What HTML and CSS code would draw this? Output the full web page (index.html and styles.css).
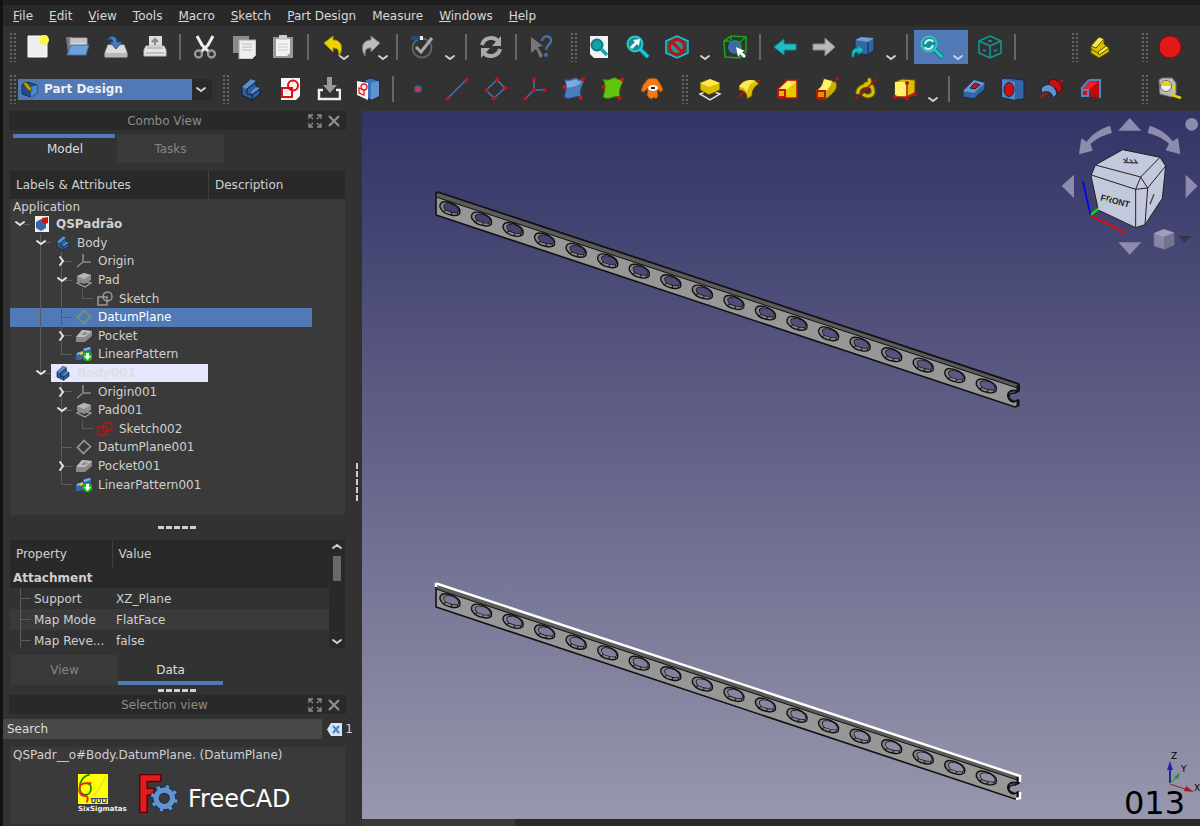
FILE: index.html
```html
<!DOCTYPE html>
<html lang="en">
<head>
  <meta charset="UTF-8">
  <title>FreeCAD</title>
  <link rel="stylesheet" href="styles.css">
</head>
<body>
  <!-- shared shapes -->
  <svg class="defs">
    <defs>
      <symbol id="down" viewBox="0 0 12 8"><path d="M2 2l4 3 4-3" fill="none" stroke="currentColor" stroke-width="2" stroke-linecap="round"/></symbol>
      <symbol id="float" viewBox="0 0 14 14"><path d="M1 5V1h4M1 1l4 4M9 1h4v4M13 1L9 5M1 9v4h4M1 13l4-4M13 9v4H9M13 13L9 9" fill="none" stroke="currentColor" stroke-width="1.3"/></symbol>
      <symbol id="cross" viewBox="0 0 14 14"><path d="M2 2l10 10M12 2L2 12" fill="none" stroke="currentColor" stroke-width="2.4"/></symbol>
      <symbol id="body" viewBox="0 0 24 24"><path d="M3 10l9-8 5 2v6l4 1v6l-8 6-10-5z" fill="#2f5f9e" stroke="#0b1f38"/><path d="M3 10l9-8 5 2-9 8z" fill="#5b8fca"/><path d="M12 15l5-5 4 1-8 6z" fill="#5b8fca"/><path d="M8 12v5l5 1 8-6M13 18v5M8 12l9-7" fill="none" stroke="#0b1f38"/></symbol>
      <symbol id="origin" viewBox="0 0 16 16"><path d="M7 1v8h8M7 9l-6 5" fill="none" stroke="#8a8a8a" stroke-width="1.6"/></symbol>
      <symbol id="pad" viewBox="0 0 16 16"><path d="M1 11l6-2 8 2-6 4z" fill="none" stroke="#a0a0a0" stroke-width="1.3"/><path d="M1 4l7-3 7 2v5l-7 4-7-3z" fill="#8c8c8c"/><path d="M1 4l7-3 7 2-7 4z" fill="#b4b4b4"/></symbol>
      <symbol id="sketch" viewBox="0 0 16 16"><path d="M1 6h9v8H1z" fill="none" stroke="currentColor" stroke-width="1.5"/><circle cx="10.500" cy="5.500" r="4.500" fill="none" stroke="currentColor" stroke-width="1.500"/></symbol>
      <symbol id="plane" viewBox="0 0 16 16"><path d="M8 1.500l6.500 6L7.500 14.500l-6-6z" fill="none" stroke="currentColor" stroke-width="1.600"/></symbol>
      <symbol id="pocket" viewBox="0 0 16 16"><path d="M0 10l6-8 10 1v5l-7 6-9 0z" fill="#8a8a8a"/><path d="M0 9l6-7 10 1-7 6z" fill="#bdbdbd"/><path d="M5 7l3-3 4 1-3 2z" fill="#8a8a8a"/></symbol>
      <symbol id="pattern" viewBox="0 0 16 16"><path d="M0 8l7-3V2l8-1v8L4 14H0z" fill="#3465a4"/><path d="M1 8l6-2M8 4l6-2" stroke="#8ab4e0" stroke-width="2"/><path d="M4 8l3-1" stroke="#edd400" stroke-width="2"/><circle cx="11.500" cy="10.500" r="4.800" fill="#10c010"/><path d="M10 7h3v3h2l-3.500 4L8 10h2z" fill="#fff"/></symbol>
      <symbol id="lens" viewBox="0 0 24 24"><path d="M14 14l8 8" stroke="#067a80" stroke-width="5"/><path d="M14 14l8 8" stroke="#25c6cc" stroke-width="3"/><circle cx="9" cy="9" r="7.500" fill="#128f96" stroke="#25c6cc" stroke-width="2"/></symbol>
    </defs>
  </svg>

  <header>
    <nav class="menu">
      <a href="#"><u>F</u>ile</a>
      <a href="#"><u>E</u>dit</a>
      <a href="#"><u>V</u>iew</a>
      <a href="#"><u>T</u>ools</a>
      <a href="#"><u>M</u>acro</a>
      <a href="#"><u>S</u>ketch</a>
      <a href="#"><u>P</u>art Design</a>
      <a href="#">Measure</a>
      <a href="#"><u>W</u>indows</a>
      <a href="#"><u>H</u>elp</a>
    </nav>

    <div class="toolbars">
      <div class="group">
        <i class="grip"></i>
        <button title="New"><svg viewBox="0 0 24 24"><path d="M2 1h19v21H2z" fill="#eee" stroke="#fff"/><circle cx="18" cy="5" r="5" fill="#fcf35a"/><circle cx="18" cy="5" r="2.500" fill="#fff82a"/></svg></button>
        <button title="Open"><svg viewBox="0 0 24 24"><path d="M1 2h6l1 2v16H3z" fill="#777"/><path d="M5 3h17v9H5z" fill="#ddd" stroke="#999"/><path d="M6 5h15M6 7h15" stroke="#aaa"/><path d="M6 10h18l-3 10H2z" fill="#6ea0da" stroke="#3e6ca8"/></svg></button>
        <button title="Save"><svg viewBox="0 0 24 24"><path d="M4 10h16l3 8v4H1v-4z" fill="#ddd" stroke="#bbb"/><path d="M1 18h22v4H1z" fill="#b8b8b8"/><path d="M3 5C7-1 13 1 13 7h5l-6 7-6-7h3c0-3-3-4-6-2z" fill="#4a7db8" stroke="#27508a"/></svg></button>
        <button title="Print"><svg viewBox="0 0 24 24"><path d="M6 1h13v12H6z" fill="#ddd"/><path d="M12 10V4M9 7l3-3 3 3" stroke="#888" stroke-width="2" fill="none"/><path d="M3 11h18l2 4v6H1v-6z" fill="#e5e5e5" stroke="#bbb"/><path d="M4 13h16M3 18h18" stroke="#999"/></svg></button>
        <i class="sep"></i>
        <button title="Cut"><svg viewBox="0 0 24 24"><path d="M4 1l5 9 7 7M20 1l-5 9-7 7" stroke="#eee" stroke-width="3" fill="none"/><ellipse cx="5.500" cy="19" rx="3.500" ry="3.500" fill="none" stroke="#999" stroke-width="2.300"/><ellipse cx="18.500" cy="19" rx="3.500" ry="3.500" fill="none" stroke="#999" stroke-width="2.300"/></svg></button>
        <button title="Copy"><svg viewBox="0 0 24 24"><path d="M1 1h16v17H1z" fill="#8b8b8b"/><path d="M7 5h17v15l-4 4H7z" fill="#eee" stroke="#aaa"/><path d="M10 9h10M10 12h10M10 15h10" stroke="#bbb"/></svg></button>
        <button title="Paste"><svg viewBox="0 0 24 24"><path d="M2 2h20v21H2z" fill="#999"/><path d="M5 4h14v14l-3 3H5z" fill="#f2f2f2"/><path d="M8 0h8v5H8z" fill="#ccc"/><path d="M7 9h10M7 12h10M7 15h10" stroke="#ccc"/></svg></button>
        <i class="sep"></i>
        <button class="drop" title="Undo"><svg viewBox="0 0 24 24"><path d="M3 8l9-7v4c10 0 10 10 6 16 0-6-1-8-6-8v4z" fill="#edd400" stroke="#a89200"/></svg><svg class="arrow"><use href="#down"/></svg></button>
        <button class="drop" title="Redo"><svg viewBox="0 0 24 24"><path d="M20 8l-9-7v4C1 5 1 15 5 21c0-6 1-8 6-8v4z" fill="#bdbdbd" stroke="#777"/></svg><svg class="arrow"><use href="#down"/></svg></button>
        <i class="sep"></i>
        <button class="drop wide" title="Check"><svg viewBox="0 0 24 24"><circle cx="12" cy="13" r="9.500" fill="none" stroke="#5d6461" stroke-width="2"/><path d="M1 1h9v4H1z" fill="#1c4c85"/><path d="M10 1h3v4h-3z" fill="#eee"/><path d="M6 12l5 5L22 3" fill="none" stroke="#aaa" stroke-width="3"/></svg><svg class="arrow"><use href="#down"/></svg></button>
        <i class="sep"></i>
        <button title="Refresh"><svg viewBox="0 0 24 24"><path d="M3 10c2-8 12-9 16-4M21 14c-2 8-12 9-16 4" fill="none" stroke="#aaa" stroke-width="4"/><path d="M22 1v10h-9zM2 23V13h9z" fill="#aaa"/></svg></button>
        <i class="sep"></i>
        <button title="What's This?"><svg viewBox="0 0 24 24"><path d="M2 2l12 9-5 1 5 9-3 2-4-9-5 4z" fill="#777"/><path d="M13 6c0-6 10-6 9 0 0 4-5 4-5 9" fill="none" stroke="#4470a8" stroke-width="2.500"/><circle cx="17" cy="20" r="2" fill="#4470a8"/></svg></button>
      </div>
      <div class="group">
        <i class="grip"></i>
        <button title="Fit all"><svg viewBox="0 0 24 24"><path d="M3 1h18v22H7l-4-4z" fill="#f2f2f2"/><circle cx="10" cy="10" r="5.500" fill="#16a2aa" stroke="#0e7b82" stroke-width="2"/><path d="M14 14l6 6" stroke="#0fa8b0" stroke-width="3.500"/></svg></button>
        <button title="Fit selection"><svg viewBox="0 0 24 24"><use href="#lens"/><path d="M4 12l5-5-2-2 7-1-1 7-2-2-5 5z" fill="#fff"/></svg></button>
        <button class="drop wide" title="Draw style"><svg viewBox="0 0 24 24"><path d="M12 1l11 5v12l-11 5-11-5V6z" fill="#0c7178" stroke="#20c3cb" stroke-width="1.500"/><circle cx="12" cy="12" r="7.500" fill="#2a8f96" stroke="#c01010" stroke-width="3"/><path d="M7 7l10 10" stroke="#c01010" stroke-width="3"/></svg><svg class="arrow"><use href="#down"/></svg></button>
        <button title="Bounding box"><svg viewBox="0 0 24 24"><circle cx="12" cy="12" r="7" fill="#3d68ad"/><path d="M1 6l7-5 15 1v15l-6 6-15-1zM1 6l16 1 6-5M17 7v16M8 1v4" fill="none" stroke="#12a51c" stroke-width="1.600"/><path d="M13 12l9 4-3 1 4 4-2 2-4-4-2 3z" fill="#fff"/></svg></button>
        <i class="sep"></i>
        <button title="Back"><svg viewBox="0 0 24 24"><path d="M1 12l10-8v5h12v6H11v5z" fill="#1fbcc4" stroke="#0c8c94"/></svg></button>
        <button title="Forward"><svg viewBox="0 0 24 24"><path d="M23 12L13 3v6H1v6h12v6z" fill="#b8b8b8" stroke="#888"/></svg></button>
        <button class="drop wide" title="Link"><svg viewBox="0 0 24 24"><path d="M4 5l6-3 13 1v12l-6 5-13-2z" fill="#3465a4" stroke="#15294a"/><path d="M4 5l6-3 13 1-6 4z" fill="#729fcf"/><path d="M17 7v13" stroke="#15294a"/><path d="M1 22c-1-7 2-9 6-9v-3l6 5-6 5v-3c-3 0-4 1-4 5z" fill="#1fbcc4" stroke="#067a80"/></svg><svg class="arrow"><use href="#down"/></svg></button>
        <i class="sep"></i>
        <button class="drop wide active" title="Sync view"><svg viewBox="0 0 24 24"><use href="#lens"/><path d="M5 9c1-5 7-5 8-2M13 10c-1 5-7 5-8 2" fill="none" stroke="#e8e8e8" stroke-width="2"/></svg><svg class="arrow"><use href="#down"/></svg></button>
        <button title="Isometric"><svg viewBox="0 0 24 24"><path d="M12 1l11 5v12l-11 5-11-5V6zM1 6l11 5 11-5M12 11v12" fill="none" stroke="#119b94" stroke-width="1.500"/><path d="M10 6h4M5 15l3 1M16 16l3-1" stroke="#119b94" stroke-width="1.500"/></svg></button>
        <i class="sep"></i>
      </div>
      <div class="group right">
        <i class="grip"></i>
        <button title="Part"><svg viewBox="0 0 24 24"><path d="M3 11L11 2l5 2v5l5 4v4l-10 6-8-5z" fill="#d9bf00" stroke="#5e5000"/><path d="M3 11L11 2l5 2-8 9zM10 17l8-6 3 2-10 7z" fill="#fce94f" stroke="#5e5000"/><path d="M3 14l7 4" stroke="#5e5000"/></svg></button>
      </div>
      <div class="group">
        <i class="grip"></i>
        <button title="Record"><svg viewBox="0 0 24 24"><circle cx="12" cy="12" r="11" fill="#e01919" stroke="#9b0505"/></svg></button>
      </div>
    </div>

    <div class="toolbars">
      <div class="group">
        <i class="grip"></i>
        <div class="workbench">
          <select aria-label="Workbench"><option>Part Design</option></select>
          <svg class="cube" viewBox="0 0 18 16"><path d="M2 4l6-3 9 3v8l-6 4-9-3z" fill="#1f4f8c" stroke="#13315a"/><path d="M11 6v10l6-4V4z" fill="#4f86c6"/><path d="M3 2l3-1 6 7-1 2-3-1z" fill="#c4a000" stroke="#5e5000"/></svg>
          <svg class="arrow"><use href="#down"/></svg>
        </div>
      </div>
      <div class="group">
        <i class="grip"></i>
        <button title="Body"><svg><use href="#body"/></svg></button>
        <button title="Create sketch"><svg viewBox="0 0 24 24"><path d="M3 1h19v18l-4 4H3z" fill="#f4f4f4"/><path d="M4 11h10v9H4z" fill="none" stroke="#e01010" stroke-width="2"/><circle cx="15" cy="8.500" r="5" fill="none" stroke="#e01010" stroke-width="2"/></svg></button>
        <button title="Attach"><svg viewBox="0 0 24 24"><path d="M10 0h5v8h5l-7 8-7-8h4z" fill="#999"/><path d="M6 13H2v9h21v-9h-4" fill="none" stroke="#eee" stroke-width="2.500"/></svg></button>
        <button title="Map sketch"><svg viewBox="0 0 24 24"><path d="M9 3l6-2 8 3v15l-8 4-6-3z" fill="#3a74b8" stroke="#102848"/><path d="M15 6l8-2v15l-8 4z" fill="#5e93d0"/><path d="M1 4l11 2v17L1 18z" fill="#f2f2f2"/><path d="M3 11l5 2v5l-5-2z" fill="none" stroke="#e02020" stroke-width="1.300"/><circle cx="8" cy="10" r="3" fill="none" stroke="#e02020" stroke-width="1.300"/></svg></button>
        <i class="sep"></i>
        <button title="Point"><svg viewBox="0 0 24 24"><circle cx="12" cy="12" r="3" fill="#ef2929" stroke="#3465a4" stroke-width="1.500"/></svg></button>
        <button title="Line"><svg viewBox="0 0 24 24"><path d="M3 21L21 3" stroke="#3f76bb" stroke-width="1.500"/><g fill="#cc1010"><circle cx="2.500" cy="21.500" r="2"/><circle cx="21.500" cy="2.500" r="2"/></g></svg></button>
        <button title="Plane"><svg viewBox="0 0 24 24"><path d="M13 3l8 8-11 10-8-8z" fill="none" stroke="#3f76bb" stroke-width="1.500"/><g fill="#cc1010"><circle cx="13" cy="2.500" r="2"/><circle cx="21.500" cy="11" r="2"/><circle cx="10" cy="21.500" r="2"/><circle cx="2.500" cy="13" r="2"/></g></svg></button>
        <button title="Local coordinate system"><svg viewBox="0 0 24 24"><path d="M11 2v11h11M11 13l-8 8" fill="none" stroke="#3f76bb" stroke-width="1.500"/><g fill="#cc1010"><circle cx="11" cy="2.500" r="2"/><circle cx="11" cy="13" r="2"/><circle cx="21.500" cy="13" r="2"/><circle cx="2.500" cy="21.500" r="2"/></g></svg></button>
        <button title="Shape binder"><svg viewBox="0 0 24 24"><path d="M2 2c6 3 9-2 13-1 2 2 4 2 7 1 0 6-5 8-3 18-7-2-11 4-17 0 2-6 3-12 0-18z" fill="#4b7dbd" stroke="#24497c"/><path d="M4 4c5 1 8-2 11-1 2 2 3 2 5 1-4 6-8 5-15 7z" fill="#7fa9dc"/><g fill="#d01212"><circle cx="21" cy="2.500" r="2"/><circle cx="2.500" cy="10" r="2"/><circle cx="18.500" cy="21" r="2"/></g></svg></button>
        <button title="Sub shape binder"><svg viewBox="0 0 24 24"><path d="M2 2c6 3 9-2 13-1 2 2 4 2 7 1 0 6-5 8-3 18-7-2-11 4-17 0 2-6 3-12 0-18z" fill="#62c510" stroke="#357a05"/><g fill="#d01212"><circle cx="21" cy="2.500" r="2"/><circle cx="2.500" cy="10" r="2"/><circle cx="18.500" cy="21" r="2"/></g></svg></button>
        <button title="Clone"><svg viewBox="0 0 24 24"><path d="M8 2c3-1 6-1 9 0l4 6 2 5-3 2-3-4 1 8-2 3-2-2-2 2-3-1-2-3 1-7-4 4-3-1 2-6z" fill="#f27a14" stroke="#a04a05"/><ellipse cx="13" cy="11" rx="5" ry="3" fill="#fff"/><path d="M11 11h4" stroke="#222" stroke-width="2"/></svg></button>
      </div>
      <div class="group">
        <i class="grip"></i>
        <button title="Pad"><svg viewBox="0 0 24 24"><path d="M2 17l9-4 11 4-10 6z" fill="none" stroke="#ddd" stroke-width="1.500"/><path d="M2 6l10-4 10 4v7l-11 5-9-5z" fill="#d9bf00" stroke="#4e4300"/><path d="M2 6l10-4 10 4-11 4z" fill="#fce94f"/></svg></button>
        <button title="Revolution"><svg viewBox="0 0 24 24"><path d="M1 20l22-17" stroke="#c01010" stroke-width="2"/><path d="M2 10C6 3 13 2 19 4l3 3c-5 2-7 7-7 12l-5 3c0-6-3-9-8-9z" fill="#d9bf00" stroke="#5e5000"/><path d="M2 10C6 3 13 2 19 4c-6 2-8 6-9 12-1-4-4-6-8-6z" fill="#fce94f"/></svg></button>
        <button title="Loft"><svg viewBox="0 0 24 24"><path d="M2 12L11 3h10v18H4z" fill="#e3c800" stroke="#c01010" stroke-width="1.500"/><path d="M3 12l9-8 8 1-10 8z" fill="#fff06a"/><path d="M2 13h7v7H2z" fill="#d9bf00" stroke="#d01010" stroke-width="2"/></svg></button>
        <button title="Pipe"><svg viewBox="0 0 24 24"><path d="M2 13C7 10 8 6 9 2l12 3c3 8-4 12-10 17H3z" fill="#c9ae00" stroke="#5e5000"/><path d="M3 13C7 10 8 6 9 2l8 2c-1 4-3 8-7 11z" fill="#fff06a"/><path d="M2 14h8v7H2z" fill="#c9a000" stroke="#c01010" stroke-width="2"/><circle cx="22" cy="2" r="1.800" fill="#c01010"/></svg></button>
        <button title="Helix"><svg viewBox="0 0 24 24"><path d="M14 2c4 2 0 5-2 5s4 2 7 3M4 17c-2-8 14-13 15-4 1 7-7 7-10 4" fill="none" stroke="#6b5b00" stroke-width="5"/><path d="M14 2c4 2 0 5-2 5s4 2 7 3M4 17c-2-8 14-13 15-4 1 7-7 7-10 4" fill="none" stroke="#d6bf00" stroke-width="3"/><path d="M1 22L23 2" stroke="#c01010" stroke-width="1.500"/></svg></button>
        <button class="drop wide" title="Primitive"><svg viewBox="0 0 24 24"><path d="M2 5l7-3 13 1v14l-8 4-12-1z" fill="#d9bf00" stroke="#5e5000"/><path d="M2 5h12v15H2z" fill="#fff06a"/><path d="M14 6v15M2 20h12l8-4" stroke="#c01010" fill="none" stroke-width="1.500"/><g fill="#c01010"><circle cx="14" cy="6" r="2"/><circle cx="14" cy="21.500" r="2"/><circle cx="2" cy="20" r="2"/><circle cx="22" cy="17" r="2"/></g></svg><svg class="arrow"><use href="#down"/></svg></button>
        <i class="sep"></i>
        <button title="Pocket"><svg viewBox="0 0 24 24"><path d="M1 14L12 3l11 3v6L12 22 1 20z" fill="#3465a4" stroke="#10284a"/><path d="M1 14L12 3l11 3-11 10z" fill="#6496cf"/><path d="M8 11l5-5 5 2-5 4z" fill="#cc1010" stroke="#10284a"/></svg></button>
        <button title="Hole"><svg viewBox="0 0 24 24"><path d="M1 2l4-1 18 2v19l-9 1-13-3z" fill="#3465a4" stroke="#10284a"/><path d="M1 2l13 3v18L1 20z" fill="#4f86c6"/><ellipse cx="8" cy="12.500" rx="5" ry="7" fill="#cc1010" stroke="#10284a"/></svg></button>
        <button title="Groove"><svg viewBox="0 0 24 24"><path d="M1 20L23 3" stroke="#c01010" stroke-width="2"/><path d="M9 4c6-4 13 1 13 9l-5 4c0-6-3-9-8-8z" fill="#cc1010" stroke="#600"/><path d="M1 12C5 5 15 6 17 17l-4 4c-1-6-6-8-11-5z" fill="#5d92d0" stroke="#10284a"/></svg></button>
        <button title="Subtractive loft"><svg viewBox="0 0 24 24"><path d="M2 12L10 3h11v18L4 19z" fill="#b80c0c"/><path d="M3 12l8-8 8 1-9 8z" fill="#ee2222"/><path d="M10 3h11v18M2 12l8-9" stroke="#4f86c6" fill="none" stroke-width="2"/><path d="M3 13h6v6H3z" fill="#cc1010" stroke="#4f86c6" stroke-width="2"/></svg></button>
      </div>
      <div class="group right">
        <i class="grip"></i>
        <button title="Measure"><svg viewBox="0 0 24 24"><path d="M1 3l3-2h10l4 5v11l-4 3-12-3z" fill="#b9bdb9" stroke="#777"/><circle cx="8" cy="9" r="5.500" fill="#eee" stroke="#666"/><path d="M3 9c0-6 10-6 10 0z" fill="#edd400"/><path d="M16 8v6" stroke="#edd400" stroke-width="2"/><path d="M14 18l9 3" stroke="#edd400" stroke-width="2.500"/></svg></button>
      </div>
    </div>
  </header>

  <main>
    <aside>
      <div class="dock">
        <h2>Combo View</h2>
        <button title="Float"><svg><use href="#float"/></svg></button>
        <button title="Close"><svg><use href="#cross"/></svg></button>
      </div>
      <div class="tabs top">
        <button class="current">Model</button>
        <button>Tasks</button>
      </div>

      <section class="tree">
        <div class="treeHead"><span>Labels &amp; Attributes</span><span>Description</span></div>
        <p>Application</p>
        <ul>
          <li><i class="g open"><svg><use href="#down"/></svg></i><svg class="ic" viewBox="0 0 16 16"><path d="M1 0h14v16H1z" fill="#eee"/><path d="M2 6l5-3 5 3v6l-5 3-5-3z" fill="#3465a4"/><path d="M8 2l6-1v6l-3 1-3-2z" fill="#d01010"/></svg><b>QSPadrão</b></li>
          <li><i class="g"></i><i class="g v open"><svg><use href="#down"/></svg></i><svg class="ic"><use href="#body"/></svg>Body</li>
          <li><i class="g"></i><i class="g v"></i><i class="g v shut"><svg><use href="#down"/></svg></i><svg class="ic"><use href="#origin"/></svg>Origin</li>
          <li><i class="g"></i><i class="g v"></i><i class="g v open"><svg><use href="#down"/></svg></i><svg class="ic"><use href="#pad"/></svg>Pad</li>
          <li><i class="g"></i><i class="g v"></i><i class="g v"></i><i class="g end"></i><svg class="ic grey"><use href="#sketch"/></svg>Sketch</li>
          <li class="selected"><i class="g"></i><i class="g v"></i><i class="g tee"></i><svg class="ic olive"><use href="#plane"/></svg>DatumPlane</li>
          <li><i class="g"></i><i class="g v"></i><i class="g v shut"><svg><use href="#down"/></svg></i><svg class="ic"><use href="#pocket"/></svg>Pocket</li>
          <li><i class="g"></i><i class="g v"></i><i class="g end"></i><svg class="ic"><use href="#pattern"/></svg>LinearPattern</li>
          <li><i class="g"></i><i class="g last open"><svg><use href="#down"/></svg></i><span class="activeBody"><svg class="ic"><use href="#body"/></svg><b>Body001</b></span></li>
          <li><i class="g"></i><i class="g"></i><i class="g v shut"><svg><use href="#down"/></svg></i><svg class="ic"><use href="#origin"/></svg>Origin001</li>
          <li><i class="g"></i><i class="g"></i><i class="g v open"><svg><use href="#down"/></svg></i><svg class="ic"><use href="#pad"/></svg>Pad001</li>
          <li><i class="g"></i><i class="g"></i><i class="g v"></i><i class="g end"></i><svg class="ic red"><use href="#sketch"/></svg>Sketch002</li>
          <li><i class="g"></i><i class="g"></i><i class="g tee"></i><svg class="ic grey"><use href="#plane"/></svg>DatumPlane001</li>
          <li><i class="g"></i><i class="g"></i><i class="g v shut"><svg><use href="#down"/></svg></i><svg class="ic"><use href="#pocket"/></svg>Pocket001</li>
          <li><i class="g"></i><i class="g"></i><i class="g end"></i><svg class="ic"><use href="#pattern"/></svg>LinearPattern001</li>
        </ul>
      </section>

      <div class="split tall"></div>

      <section class="props">
        <table>
          <thead><tr><th>Property</th><th>Value</th></tr></thead>
          <tbody>
            <tr class="cat"><th colspan="2">Attachment</th></tr>
            <tr><td><i class="g tee"></i>Support</td><td>XZ_Plane</td></tr>
            <tr class="alt"><td><i class="g tee"></i>Map Mode</td><td>FlatFace</td></tr>
            <tr><td><i class="g tee"></i>Map Reve...</td><td>false</td></tr>
          </tbody>
        </table>
        <div class="scroll">
          <svg class="up"><use href="#down"/></svg>
          <i class="thumb"></i>
          <svg><use href="#down"/></svg>
        </div>
      </section>
      <div class="tabs bottom">
        <button>View</button>
        <button class="current">Data</button>
      </div>

      <div class="split"></div>

      <div class="dock">
        <h2>Selection view</h2>
        <button title="Float"><svg><use href="#float"/></svg></button>
        <button title="Close"><svg><use href="#cross"/></svg></button>
      </div>
      <div class="search">
        <input type="text" placeholder="Search" aria-label="Search">
        <button title="Clear"><svg viewBox="0 0 15 13"><path d="M0 6.500L4 0h11v13H4z" fill="#d5e5f8"/><path d="M6 3l6 7M12 3l-6 7" stroke="#4f80be" stroke-width="2"/></svg></button>
        <span>1</span>
      </div>
      <section class="picked">
        <p>QSPadr__o#Body.DatumPlane. (DatumPlane)</p>
        <div class="brand">
          <div class="six">
            <svg viewBox="0 0 90 90"><path d="M0 0h90v90H0z" fill="#ff0"/><path d="M35 2C15 5 5 25 5 40c0 30 32 28 34 5 1-15-8-17-12-17" fill="none" stroke="#080" stroke-width="5"/><path d="M40 28H20C-2 30 0 65 18 65c12 0 14 8 8 20" fill="none" stroke="#e22" stroke-width="6"/><path d="M45 62c20-5 25-40 42-58" fill="none" stroke="#cc5" stroke-width="3"/><path d="M38 74h50M42 74v12h9V75M58 76v10h9V76M74 76v10h10V76" fill="none" stroke="#228" stroke-width="3"/></svg>
            <span>SixSigmatas</span>
          </div>
          <svg class="fc" viewBox="0 0 114 114"><path d="M2 2h62v20H24v20h20v20H24v50H2z" fill="#e01b1f" stroke="#5a0000" stroke-width="4"/><circle cx="74" cy="71" r="24" fill="none" stroke="#1b3557" stroke-width="22"/><circle cx="74" cy="71" r="34" fill="none" stroke="#1b3557" stroke-width="15" stroke-dasharray="16 10.700"/><circle cx="74" cy="71" r="34" fill="none" stroke="#6393cc" stroke-width="10" stroke-dasharray="10 16.700" stroke-dashoffset="-3"/><circle cx="74" cy="71" r="24" fill="none" stroke="#6393cc" stroke-width="15"/></svg>
          <strong>FreeCAD</strong>
        </div>
      </section>
    </aside>

    <div class="handle"></div>

    <div class="work">
      <div class="view">
        <svg class="scene" viewBox="362 111 838 708">
          <defs>
            <path id="hole" d="M-6-3.500Q-5-5.500-1-5Q5-4.500 8 0Q9 3 7 3.500L2 3-4 1Q-6-1-6-3.500z"/>
            <g id="rim"><path d="M-10-4Q-9-7.500-5-7.300Q2-7 8-2Q11 1 9.500 5Q7 7.500 1 6Q-6 5-9 0Q-10.500-2-10-4z" fill="#858585" stroke="#111" stroke-width="1.400"/><path d="M-4 1l-3 2M2 3l-1 3M7 3.500l1 2" stroke="#111"/><use href="#hole" fill="none" stroke="#111" stroke-width="1.400"/></g>
            <g id="rims"></g>
            <mask id="cut" maskUnits="userSpaceOnUse" x="362" y="111" width="838" height="708">
              <path d="M362 111h838v708H362z" fill="#fff"/>
              <g id="holes"></g>
            </mask>
            <g id="bar">
              <g mask="url(#cut)">
                <path d="M436 193l2-1 581 192v7l-4 2c-8-1-8 9-1 9l4-2v6l-3 1L436 215z" fill="#979797" stroke="#111" stroke-width="1.600"/>
                <path d="M436 194l2-1.500 581 192v4L436 197z" fill="#5c5c5c" stroke="#111"/>
                <path d="M1017 391c-11-3-12 9-3 10" fill="none" stroke="#111" stroke-width="2"/>
                <path d="M1018 385v6M1018 400v6" stroke="#111" stroke-width="3"/>
                <use href="#rims"/>
              </g>
            </g>
          </defs>
          <use href="#bar"/>
          <g transform="translate(0 392)">
            <use href="#bar"/>
            <path d="M436 195v-3h2l582 192v6M1020 400v6l-4 1" fill="none" stroke="#fff" stroke-width="2.500"/>
          </g>
        </svg>

        <svg class="navcube" viewBox="0 18 480 462">
          <g fill="#8c8cae">
            <path d="M235 77l34-38 35 38zM235 412h69l-35 37zM65 243l37-34v70zM473 243l-36-34v70z"/>
            <circle cx="455" cy="58" r="19"/>
            <path d="M210 62l6 22c-30 8-48 18-64 32l6 21-41 11 7-48 16 10c18-24 40-38 70-48zM329 62l-6 22c30 8 48 18 64 32l-10 20 44 12-7-50-16 11c-18-24-40-37-69-47z"/>
          </g>
          <g fill="#c3c8dc" stroke="#222" stroke-width="3" stroke-linejoin="round">
            <path d="M166 180l82-46 112 23 17 26-10 97-52 79-28 9-112-53-22-103z"/>
            <path d="M166 180l136 36 58-59M154 210l133 43 0 114M302 216l-15 37 36-4zM323 249l54-66M323 249l-8 110" fill="none"/>
          </g>
          <text x="180" y="286" transform="rotate(14 180 286)">FRONT</text>
          <path d="M250 162l12 8M262 158l-3 14M270 163l8 10M283 163l8 10M250 172l44 2M342 268l-12 30" stroke="#444" stroke-width="4"/>
          <path d="M152 330l22-18" stroke="#0d0" stroke-width="7"/><path d="M174 314l48-46" stroke="#a0dfa8" stroke-width="4"/>
          <path d="M151 328L129 230" stroke="#00f" stroke-width="5"/><path d="M153 332l103 51" stroke="#f00" stroke-width="5"/>
          <path d="M342 385l30-12 30 10v37l-30 13-30-10z" fill="#8888a6" stroke="#6f6f90" stroke-width="2"/><path d="M342 385l30-12 30 10-30 12z" fill="#a0a0bc"/><path d="M372 395l30-12v37l-30 13z" fill="#73738f"/>
          <path d="M415 393h38l-19 20z" fill="#33334a"/>
        </svg>

        <svg class="axes" viewBox="0 0 150 89">
          <path d="M120 53V36" stroke="#2525a0" stroke-width="2"/><path d="M117 40l3-9 3 9z" fill="#2525a0"/>
          <path d="M120 53l7-6" stroke="#259025" stroke-width="1"/><path d="M124 47l6-4-2 6z" fill="#259025"/>
          <path d="M120 54l18 6" stroke="#a02020" stroke-width="1"/><path d="M136 56l8 6-10-1z" fill="#a02020"/>
          <text x="121" y="29">Z</text><text x="131" y="42">Y</text><text x="144" y="61">X</text>
        </svg>
        <span class="counter">013</span>
      </div>
      <div class="status"></div>
    </div>
  </main>

  <script>
    // 18 slots along the bar, used for the rims and for the mask
    const rims = document.getElementById("rims");
    const holes = document.getElementById("holes");
    for (let i = 0; i < 18; i++) {
      const pos = 'transform="translate(' + (450 + i * 31.55) + ' ' + (209 + i * 10.43) + ')"';
      rims.innerHTML += '<use href="#rim" ' + pos + '/>';
      holes.innerHTML += '<use href="#hole" ' + pos + '/>';
    }
  </script>
</body>
</html>
```
FILE: styles.css
```css
* {
  box-sizing: border-box;
}
body {
  margin: 0;
  padding-top: 5px;
  border-left: 3px solid #121212;
  height: 100vh;
  display: flex;
  flex-direction: column;
  background: #323232;
  color: #d0d0d0;
  font: 12px/18px "DejaVu Sans", sans-serif;
  overflow: hidden;
}
body::before {
  content: "";
  height: 5px;
  margin-top: -5px;
  background: #1e1e1e;
}
button {
  border: 0;
  padding: 0;
  background: none;
  color: inherit;
  font: inherit;
}
p, h2, ul {
  margin: 0;
  padding: 0;
}
.defs {
  position: absolute;
  width: 0;
  height: 0;
}

/* menu and toolbars */
.menu {
  display: flex;
  gap: 16px;
  height: 21px;
  padding: 2px 10px;
  background: #292929;
}
.menu a {
  color: #d8d8d8;
  text-decoration: none;
}
.toolbars {
  display: flex;
  gap: 9px;
  height: 42px;
  padding: 0 11px 0 5px;
}
.group {
  display: flex;
  align-items: center;
}
.group.right {
  margin-left: auto;
}
.group.right + .group {
  margin-left: 12px;
}
.grip {
  width: 10px;
  height: 30px;
  background: radial-gradient(circle, #666 1px, transparent 1px) 1px 0 / 4px 4px repeat;
  background-clip: content-box;
  padding-right: 2px;
}
.sep {
  width: 11px;
  height: 26px;
  background: linear-gradient(#666, #666) center / 2px 100% no-repeat;
}
.group button {
  position: relative;
  display: flex;
  align-items: center;
  width: 39px;
  height: 34px;
  padding-left: 8px;
}
.group button svg {
  width: 24px;
  height: 24px;
}
.group button.wide {
  width: 58px;
}
.group button.active {
  width: 54px;
  margin: 0 2px;
  padding-left: 6px;
  background: #5179b5;
}
.group .drop .arrow {
  position: absolute;
  right: 2px;
  bottom: 2px;
  width: 12px;
  height: 8px;
}
.group .wide .arrow {
  right: 4px;
}
.workbench {
  position: relative;
  width: 194px;
}
.workbench select {
  appearance: none;
  width: 100%;
  height: 21px;
  border: 0;
  padding: 0 26px;
  background: linear-gradient(to left, #2a2a2a 20px, #5179b5 20px);
  color: #eee;
  font: bold 12px "DejaVu Sans", sans-serif;
}
.workbench svg {
  position: absolute;
  pointer-events: none;
}
.workbench .cube {
  left: 2px;
  top: 2px;
  width: 18px;
  height: 16px;
}
.workbench .arrow {
  right: 5px;
  top: 7px;
  width: 12px;
  height: 8px;
}

/* left side */
main {
  flex: 1;
  display: flex;
  min-height: 0;
  padding-top: 1px;
}
aside {
  width: 344px;
  display: flex;
  flex-direction: column;
}
.dock {
  display: flex;
  align-items: center;
  height: 19px;
  margin-left: 6px;
  margin-right: 1px;
  background: #292929;
  color: #8c8c8c;
}
.dock h2 {
  flex: 1;
  padding-left: 12px;
  text-align: center;
  font-size: 12px;
  font-weight: normal;
}
.dock button {
  width: 19px;
  height: 18px;
}
.dock svg {
  display: block;
  width: 14px;
  height: 14px;
}
.tabs {
  display: flex;
  height: 29px;
  margin-left: 8px;
}
.tabs button {
  width: 107px;
  background: #3a3a3a;
  color: #858585;
}
.tabs .current {
  background: none;
  color: #ddd;
}
.tabs.top {
  margin: 4px 0 8px 10px;
}
.tabs.top .current {
  width: 104px;
  background: linear-gradient(#5179b5, #5179b5) left top / 102px 4px no-repeat;
}
.tabs.bottom {
  margin-top: 7px;
  height: 30px;
}
.tabs.bottom .current {
  width: 105px;
  border-bottom: 4px solid #5179b5;
  padding-top: 4px;
}
.tree {
  flex: 1;
  margin: 0 2px 0 7px;
  background: #3a3a3a;
  white-space: nowrap;
}
.treeHead {
  display: flex;
  height: 28px;
  background: #292929;
  line-height: 28px;
}
.treeHead span {
  width: 198px;
  padding-left: 6px;
}
.treeHead span + span {
  flex: 1;
  border-left: 1px solid #3f3f3f;
}
.tree p {
  padding-left: 3px;
  height: 16px;
  line-height: 16px;
}
.tree ul {
  display: grid;
  grid-auto-rows: 1fr;
  height: 279px;
  list-style: none;
}
.tree li {
  display: flex;
  align-items: center;
}
.g {
  flex: none;
  width: 21px;
  align-self: stretch;
  display: flex;
  align-items: center;
  justify-content: center;
}
.tree li > .g:first-child {
  width: 20px;
}
.g svg {
  width: 12px;
  height: 8px;
  color: #e4e4e4;
}
.g.shut svg {
  transform: rotate(-90deg);
}
.g.v {
  background: linear-gradient(#5c5c5c, #5c5c5c) 10px 0 / 1px 100% no-repeat;
}
.g.open, .g.shut {
  background: linear-gradient(#5c5c5c, #5c5c5c) 14px 50% / 7px 1px no-repeat;
}
.g.v.open, .g.v.shut, .g.tee {
  background: linear-gradient(#5c5c5c, #5c5c5c) 10px 0 / 1px 100% no-repeat,
    linear-gradient(#5c5c5c, #5c5c5c) 10px 50% / 11px 1px no-repeat;
}
.g.end, .g.last.open {
  background: linear-gradient(#5c5c5c, #5c5c5c) 10px 0 / 1px 50% no-repeat,
    linear-gradient(#5c5c5c, #5c5c5c) 10px 50% / 11px 1px no-repeat;
}
.ic {
  flex: none;
  width: 16px;
  height: 16px;
  margin: 0 6px 0 4px;
}
.grey {
  color: #999;
}
.olive {
  color: #7f9175;
}
.red {
  color: #c01515;
}
.tree .selected {
  width: 90%;
  background: #5179b5;
  color: #fff;
}
.activeBody {
  display: flex;
  align-items: center;
  width: 157px;
  height: 100%;
  background: #e6e6ff;
  color: #dedee6;
}
.split {
  height: 10px;
  background: repeating-linear-gradient(to right, #d0d0d0 0 6px, transparent 6px 8px) 155px center / 40px 3px no-repeat;
}
.split.tall {
  height: 25px;
}
.props {
  display: flex;
  height: 108px;
  margin: 0 2px 0 7px;
  overflow: hidden;
}
.props table {
  flex: 1;
  height: 111px;
  border-collapse: collapse;
  table-layout: fixed;
}
.props th, .props td {
  padding: 0;
  height: 21px;
  text-align: left;
}
.props td:first-child {
  display: flex;
  align-items: center;
  width: 102px;
  white-space: nowrap;
}
.props td + td {
  padding-left: 4px;
}
.props td .g {
  width: 24px;
}
.props thead th {
  height: 28px;
  padding-left: 6px;
  background: #292929;
  font-weight: normal;
}
.props thead th:first-child {
  width: 102px;
}
.props thead th + th {
  border-left: 1px solid #3f3f3f;
}
.props .cat th {
  height: 20px;
  padding-left: 3px;
  background: #292929;
}
.props .alt {
  background: #3a3a3a;
}
.scroll {
  width: 16px;
  display: flex;
  flex-direction: column;
  align-items: center;
  padding: 2px 0;
  background: #292929;
}
.scroll svg {
  width: 12px;
  height: 8px;
  margin-top: auto;
}
.scroll .up {
  margin: 0 0 6px;
  transform: rotate(180deg);
}
.thumb {
  width: 8px;
  height: 25px;
  background: #696969;
}
.search {
  display: flex;
  align-items: center;
  width: 350px;
  height: 20px;
  margin: 5px 0 8px;
}
.search input {
  flex: 1;
  height: 20px;
  border: 0;
  padding: 0 4px;
  background: #484848;
  color: #ddd;
  font: inherit;
}
.search input::placeholder {
  color: #ddd;
}
.search button {
  width: 15px;
  height: 13px;
  margin: 0 3px 0 5px;
}
.search svg {
  display: block;
}
.picked {
  height: 77px;
  margin: 0 2px 2px 7px;
  background: #3a3a3a;
}
.picked p {
  padding-left: 3px;
  line-height: 16px;
}
.brand {
  display: flex;
  padding: 11px 0 0 68px;
}
.six {
  width: 61px;
  font: bold 7px/10px "DejaVu Sans", sans-serif;
  color: #eee;
}
.six svg {
  display: block;
  width: 30px;
  height: 30px;
}
.fc {
  width: 39px;
  height: 39px;
}
.brand strong {
  padding: 12px 0 0 10px;
  color: #fff;
  font: 24px/26px "DejaVu Sans", sans-serif;
}
.handle {
  width: 15px;
  background: repeating-linear-gradient(#d0d0d0 0 6px, transparent 6px 8px) 9px calc(50% + 14px) / 2px 40px no-repeat;
}

/* 3D view */
.work {
  flex: 1;
  display: flex;
  flex-direction: column;
}
.view {
  position: relative;
  flex: 1;
  min-height: 0;
  background: linear-gradient(#333366, #9797ae);
}
.scene {
  display: block;
  width: 100%;
  height: 100%;
}
.navcube {
  position: absolute;
  top: 0;
  right: 0;
  width: 160px;
  height: 154px;
}
.navcube text {
  font: bold 26px "Liberation Sans", sans-serif;
  fill: #222;
}
.axes {
  position: absolute;
  right: 0;
  bottom: 0;
  width: 150px;
  height: 89px;
}
.axes text {
  font: 9px "DejaVu Sans", sans-serif;
}
.counter {
  position: absolute;
  right: 15px;
  bottom: 0;
  color: #000;
  font: 32px/32px "DejaVu Sans", sans-serif;
}
.status {
  height: 7px;
  background: linear-gradient(to right, #3a3a3a 153px, #2a2a2a 153px);
}
```
